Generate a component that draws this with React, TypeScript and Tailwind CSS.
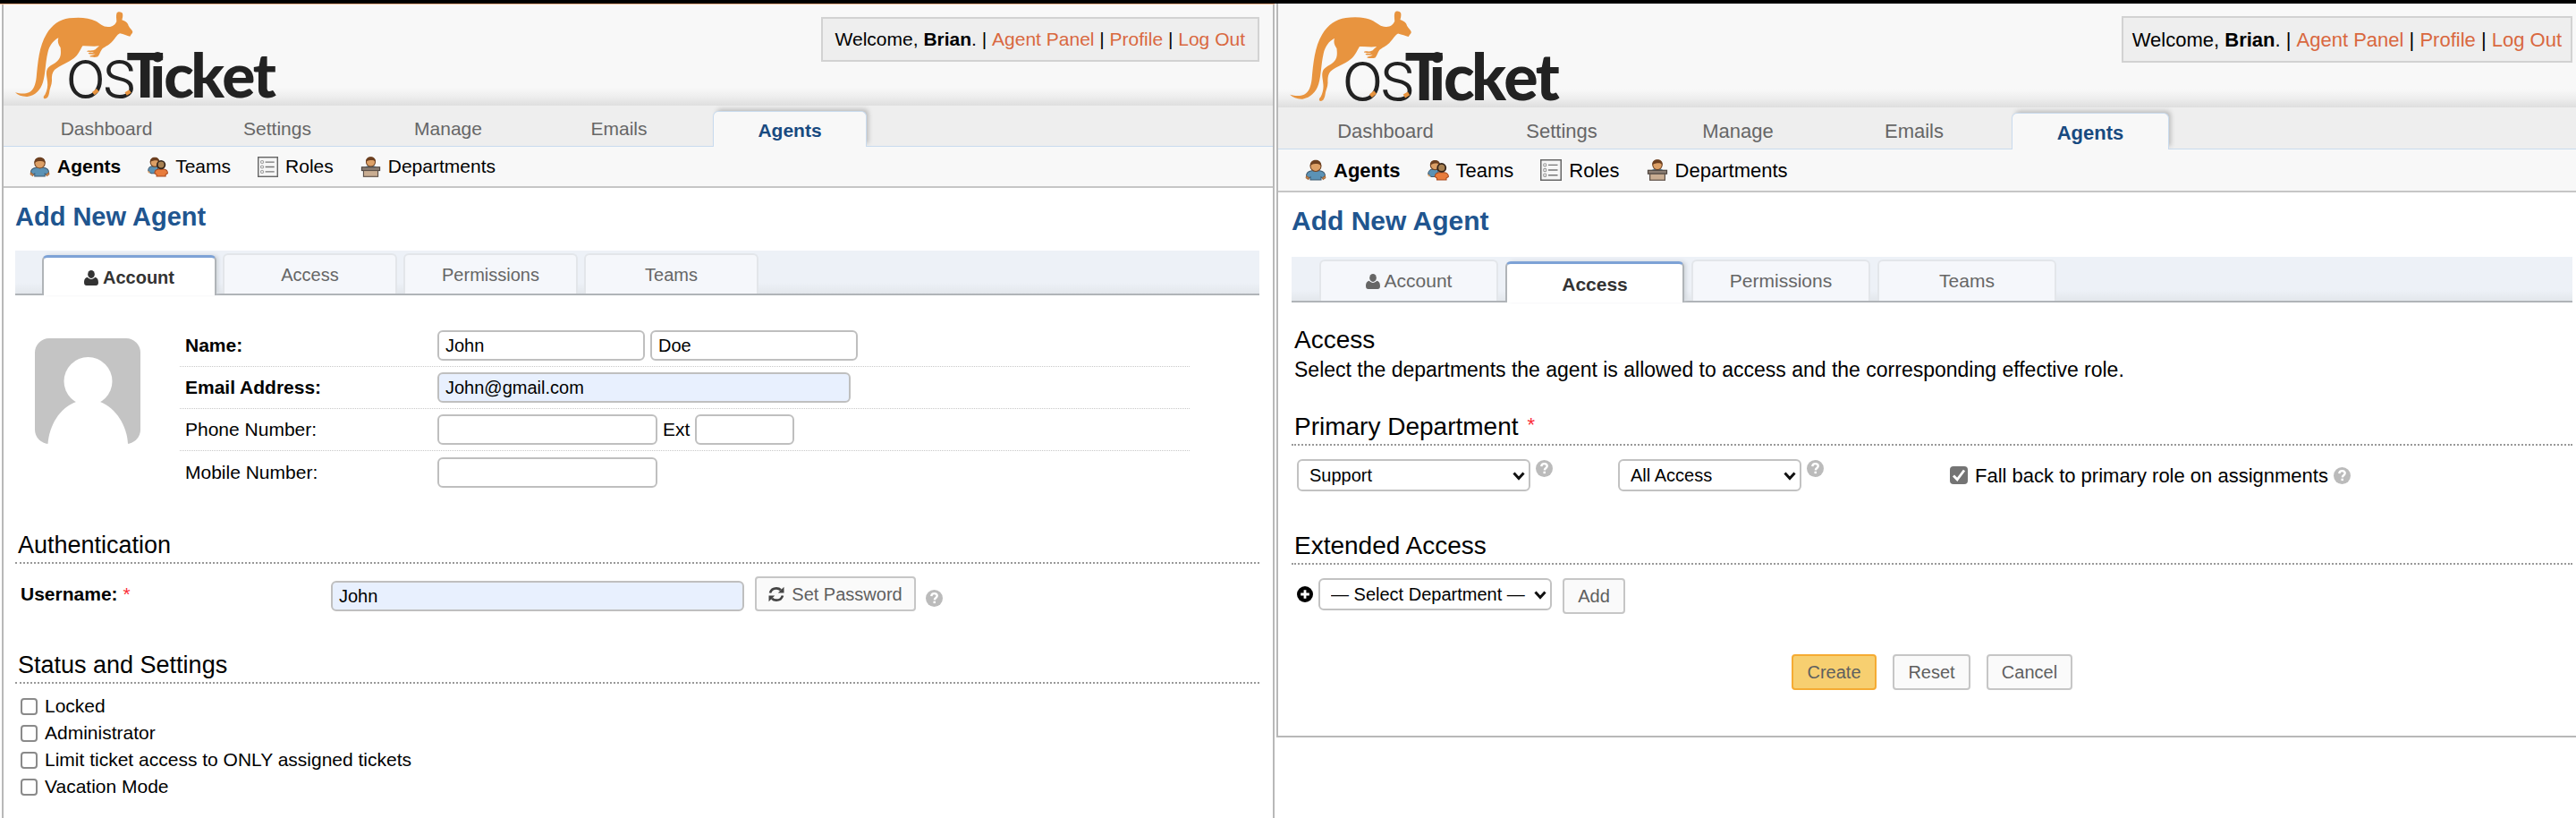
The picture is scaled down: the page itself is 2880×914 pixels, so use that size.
import React from "react";

type Size = "sm" | "lg";

const styles = {
  sm: {
    header: "h-[113px]",
    logo: "h-[108px] w-[300px]",
    welcome: "mt-[14px] mr-[15px] h-[50px] px-[14px] text-[21px]",
    nav: "h-[46px] gap-[19px] pl-[29px] text-[21px]",
    navItem: "w-[172px]",
    navActive: "h-[40px]",
    sub: "h-[46px] gap-[30px] pl-[29px] text-[21px]",
    subItem: "gap-2",
    subIcon: "size-[23px]",
    body: "pl-[13px] pr-[15px]",
    title: "pt-[14px] mb-5 text-[29px]",
    bar: "h-[50px] gap-[7px] pl-[30px] text-[20px]",
    tab: "w-[195px] h-[45px]",
    heading: "text-[27px]",
  },
  lg: {
    header: "h-[116px]",
    logo: "h-[112px] w-[310px]",
    welcome: "mt-[14px] mr-1 h-[52px] px-[10px] text-[22px]",
    nav: "h-[47px] gap-[21px] pl-[32px] text-[22px]",
    navItem: "w-[176px]",
    navActive: "h-[41px]",
    sub: "h-[48px] gap-[30px] pl-[30px] text-[22px]",
    subItem: "gap-2",
    subIcon: "size-[24px]",
    body: "pl-[15px] pr-1",
    title: "pt-[14px] mb-[22px] text-[30px]",
    bar: "h-[51px] gap-2 pl-[31px] text-[21px]",
    tab: "w-[200px] h-[46px]",
    heading: "text-[28px]",
  },
};

function Logo({ className }: { className: string }) {
  return (
    <svg viewBox="39 12 900 324" className={className} role="img" aria-label="osTicket">
      <path
        fill="#e8943f"
        d="M51 307C66 311 84 313 97 307C113 299 119 281 122 257C127 205 131 152 156 111C174 81 200 62 232 58C262 54 298 55 322 68C337 77 345 86 362 87C377 88 386 80 391 69C391 60 388 50 392 40C396 34 408 36 411 42C413 50 411 57 409 64C419 68 428 72 431 83C435 91 444 97 445 104C444 109 439 112 436 119C426 117 415 112 402 109C392 113 386 128 374 139C363 150 349 155 342 162C336 169 335 179 328 187C320 190 308 189 301 186C302 182 313 183 320 178C311 179 301 179 296 176C297 172 307 175 315 171C307 171 297 173 291 169C294 163 309 170 320 163C325 158 330 153 333 151C313 154 293 150 277 151C268 166 263 181 248 192C228 208 202 215 183 231C175 240 173 252 174 268C174 283 166 294 165 309C163 318 160 327 151 328C144 327 145 319 151 314C158 301 161 286 159 271C158 255 153 243 158 230C164 216 183 212 193 201C207 188 204 171 203 157C195 146 192 136 196 124C177 134 165 151 160 174C152 208 153 243 144 273C136 299 118 317 92 321C76 322 60 316 51 307Z"
      />
      <text y="324" fill="#222222">
        <tspan x="222 342" fontFamily="Roboto, sans-serif" fontWeight="300" fontSize="232">os</tspan>
        <tspan x="424 502 550 640 745 848" fontFamily="Lato, sans-serif" fontWeight="900" fontSize="208">Ticket</tspan>
      </text>
      <g stroke="#e8943f" strokeWidth="13">
        <path d="M313 311L328 299" />
        <path d="M422 312L437 303" />
      </g>
    </svg>
  );
}

function Person({ x = 0, shirt, skin, hair }: { x?: number; shirt: string; skin: string; hair: string }) {
  return (
    <g transform={`translate(${x} 0)`} strokeWidth="0.7">
      <path d="M1 12.5C1 10 3 8.800 5 8.500H11C13 8.800 15 10 15 12.500L13 14L12 13.200V15.300H4V13.200L3 14Z" fill={shirt} stroke="#3f5a70" />
      <path d="M1 12.500L3 14L2.500 15L0.800 13.800ZM15 12.500L13 14L13.500 15L15.200 13.800Z" fill={skin} stroke="#a5693a" />
      <circle cx="8" cy="5" r="4" fill={skin} stroke="#6d4020" />
      <path d="M3.900 5C3.600 2 5.500 0.500 8 0.500S12.400 2 12.100 5C11 4 10.500 3.400 9 3.400S5 3.500 3.900 5Z" fill={hair} />
    </g>
  );
}

function AgentIcon({ className }: { className: string }) {
  return (
    <svg viewBox="0 0 16 16" className={className} aria-hidden="true">
      <Person shirt="#5b92b5" skin="#dda066" hair="#6d4020" />
    </svg>
  );
}

function TeamIcon({ className }: { className: string }) {
  return (
    <svg viewBox="0 0 16 16" className={className} aria-hidden="true">
      <path d="M0.500 10.800C0.500 9 2 7.600 3.500 7.400H8V13H3L1.800 12.400Z" fill="#5b92b5" stroke="#3f5a70" strokeWidth="0.700" />
      <path d="M0.300 10.800L2 12.200L1.500 13L0.300 12.200Z" fill="#dda066" />
      <circle cx="5.600" cy="4.400" r="3.400" fill="#dda066" stroke="#6d4020" strokeWidth="0.700" />
      <path d="M2 4.600C1.700 2 3.500 0.600 5.600 0.600S9.400 2 9.200 4.400C8 3.300 7.600 3 6.400 3S3 3.200 2 4.600Z" fill="#6d4020" />
      <path d="M5.500 13C5.500 11 7 10 8.500 9.800H12.500C14 10 15.600 11 15.600 13L14 14V15.300H7V14Z" fill="#e87c3c" stroke="#a8481c" strokeWidth="0.700" />
      <circle cx="10.500" cy="6.300" r="3" fill="#a88152" stroke="#33241a" strokeWidth="1.200" />
    </svg>
  );
}

function RoleIcon({ className }: { className: string }) {
  return (
    <svg viewBox="0 0 16 16" className={className} aria-hidden="true">
      <rect x="0.500" y="0.500" width="15" height="15" fill="#f6f6f6" stroke="#666666" />
      <g fill="none" stroke="#999999" strokeWidth="0.700">
        <circle cx="3.500" cy="4.200" r="1.100" />
        <circle cx="3.500" cy="8" r="1.100" />
        <circle cx="3.500" cy="11.800" r="1.100" />
      </g>
      <path d="M6 4.200H13M6 8H13M6 11.800H13" stroke="#777777" strokeWidth="0.900" />
    </svg>
  );
}

function DepartmentIcon({ className }: { className: string }) {
  return (
    <svg viewBox="0 0 16 16" className={className} aria-hidden="true">
      <path d="M3.500 8.500C4 7.500 5.500 7 8 7S12 7.500 12.500 8.500Z" fill="#5b92b5" />
      <circle cx="8" cy="4.200" r="3.500" fill="#dda066" stroke="#6d4020" strokeWidth="0.700" />
      <path d="M4.200 4.200C4 1.500 5.800 0.200 8 0.200S12 1.500 11.800 4.200C10.800 3 10 2.800 8.800 2.800S5.200 3 4.200 4.200Z" fill="#6d4020" />
      <rect x="1" y="8.200" width="14" height="2.600" fill="#8b7d72" stroke="#4d4540" strokeWidth="0.800" />
      <rect x="2.400" y="10.800" width="11.200" height="4.700" fill="#c9ad92" stroke="#5c5048" strokeWidth="0.800" />
    </svg>
  );
}

function UserGlyph() {
  return (
    <svg viewBox="0 0 15 16" className="mr-[5px] h-[17px] w-4" fill="currentColor" aria-hidden="true">
      <ellipse cx="7.500" cy="4.200" rx="3.600" ry="4.200" />
      <path d="M3.600 7.300C4.700 8.600 6 9.300 7.500 9.300S10.300 8.600 11.400 7.300C14 7.600 15 10 15 13C15 15 14 16 12.500 16H2.500C1 16 0 15 0 13C0 10 1 7.600 3.600 7.300Z" />
    </svg>
  );
}

function Help({ className = "" }: { className?: string }) {
  return (
    <a href="#help" aria-label="Help" className={`block shrink-0 ${className}`}>
      <svg viewBox="0 0 20 20" className="size-[19px]" aria-hidden="true">
        <circle cx="10" cy="10" r="10" fill="#bbbbbb" />
        <path d="M6.600 7.400C6.800 5.300 8.200 4.300 10 4.300C12.100 4.300 13.400 5.500 13.400 7.200C13.400 9.500 10.500 9.400 10.300 12" fill="none" stroke="#ffffff" strokeWidth="2.500" />
        <rect x="8.900" y="13.400" width="2.700" height="2.500" fill="#ffffff" />
      </svg>
    </a>
  );
}

function Header({ size }: { size: Size }) {
  const s = styles[size];
  const links = ["Agent Panel", "Profile", "Log Out"];
  return (
    <header className={`flex items-start justify-between bg-[linear-gradient(to_top,#dedede_0,#eeeeee_10px,#f8f8f8_20px)] pl-[9px] ${s.header}`}>
      <a href="#home">
        <Logo className={s.logo} />
      </a>
      <p className={`flex items-center border-2 border-[#d2d2d2] bg-[#eeeeee] whitespace-pre ${s.welcome}`}>
        <span>Welcome, </span>
        <strong>Brian</strong>
        <span>.</span>
        {links.map((link) => (
          <React.Fragment key={link}>
            <span> | </span>
            <a href="#account" className="text-[#d9683f]">{link}</a>
          </React.Fragment>
        ))}
      </p>
    </header>
  );
}

function Navigation({ size }: { size: Size }) {
  const s = styles[size];
  const tabs = ["Dashboard", "Settings", "Manage", "Emails", "Agents"];
  const items = [
    { label: "Agents", Icon: AgentIcon },
    { label: "Teams", Icon: TeamIcon },
    { label: "Roles", Icon: RoleIcon },
    { label: "Departments", Icon: DepartmentIcon },
  ];
  return (
    <>
      <nav className={`flex items-end border-b border-[#c9dbee] bg-[#eeeeee] ${s.nav}`}>
        {tabs.map((tab) => (
          <a
            key={tab}
            href="#section"
            className={`flex items-center justify-center pt-0.5 ${s.navItem} ${s.navActive} ${
              tab === "Agents"
                ? "-mb-px rounded-t-[6px] border border-b-0 border-[#c9dbee] bg-[#f8f8f8] font-bold text-[#184a80] shadow-[3px_-3px_5px_-1px_#bbbbbb]"
                : "text-[#666666]"
            }`}
          >
            {tab}
          </a>
        ))}
      </nav>
      <nav className={`relative flex items-center border-b-2 border-[#c6c6c6] bg-[#f8f8f8] ${s.sub}`}>
        {items.map(({ label, Icon }) => (
          <a key={label} href="#list" className={`flex items-center ${s.subItem} ${label === "Agents" ? "font-bold" : ""}`}>
            <Icon className={s.subIcon} />
            {label}
          </a>
        ))}
      </nav>
    </>
  );
}

function Tabs({ size, active }: { size: Size; active: string }) {
  const s = styles[size];
  return (
    <div role="tablist" className={`flex items-end border-b-2 border-[#b0b4b8] bg-[linear-gradient(to_top,#e3e7ec,#edf1f7_12px)] ${s.bar}`}>
      {["Account", "Access", "Permissions", "Teams"].map((tab) => (
        <button
          key={tab}
          type="button"
          role="tab"
          aria-selected={tab === active}
          className={`flex items-center justify-center rounded-t-[6px] ${s.tab} ${
            tab === active
              ? "-mb-0.5 border-x-2 border-t-[3px] border-x-[#b0b4b8] border-t-[#7da2d6] bg-white pt-0.5 font-bold text-[#333333] shadow-[3px_-1px_4px_-1px_#cfd4da]"
              : "border-2 border-b-0 border-[#e3e6ea] bg-[#f5f7fb] text-[#666666]"
          }`}
        >
          {tab === "Account" && <UserGlyph />}
          {tab}
        </button>
      ))}
    </div>
  );
}

function Heading({ size, required, className, children }: { size: Size; required?: boolean; className: string; children: string }) {
  return (
    <h2 className={`border-b-2 border-dotted border-[#999999] pt-0.5 pb-px leading-9 ${styles[size].heading} ${className}`}>
      <span className="pl-[3px]">{children}</span>
      {required && <span className="ml-[10px] align-top text-[22px] leading-8 text-red-500">*</span>}
    </h2>
  );
}

const field = "h-[34px] rounded-[6px] border-2 border-[#bfbfbf] px-[7px] text-[20px]";
const buttonBase = "flex items-center justify-center rounded-[4px] border-2 text-[20px] text-[#5f5f5f]";
const buttonPlain = "border-[#c6c6c6] bg-[#fafafa]";

function Row({ id, label, bold, children }: { id: string; label: string; bold?: boolean; children: React.ReactNode }) {
  return (
    <div className="flex h-[47px] items-center border-b border-dotted border-[#c8c8c8] pl-[6px] last:border-0">
      <label htmlFor={id} className={`w-[282px] ${bold ? "font-bold" : ""}`}>{label}</label>
      <div className="flex items-center gap-[6px]">{children}</div>
    </div>
  );
}

function Avatar() {
  return (
    <svg viewBox="0 0 118 118" className="mt-[15px] ml-[22px] size-[118px] shrink-0" role="img" aria-label="Avatar">
      <rect width="118" height="118" rx="16" fill="#c4c4c4" />
      <ellipse cx="59.500" cy="48" rx="27" ry="27" fill="#ffffff" />
      <path d="M14.500 118C16 98 27 78 46 71H73C91 78 103 98 104 118Z" fill="#ffffff" />
    </svg>
  );
}

function AccountPanel() {
  return (
    <form className="text-[21px]">
      <div className="mt-[33px] flex">
        <Avatar />
        <div className="mr-[78px] ml-[44px] flex-1">
          <Row id="first" label="Name:" bold>
            <input id="first" defaultValue="John" className={`w-[232px] ${field}`} />
            <input aria-label="Last name" defaultValue="Doe" className={`w-[232px] ${field}`} />
          </Row>
          <Row id="email" label="Email Address:" bold>
            <input id="email" defaultValue="John@gmail.com" className={`w-[462px] bg-[#e8f0fe] ${field}`} />
          </Row>
          <Row id="phone" label="Phone Number:">
            <input id="phone" className={`w-[246px] ${field}`} />
            <label htmlFor="ext">Ext</label>
            <input id="ext" className={`w-[111px] ${field}`} />
          </Row>
          <Row id="mobile" label="Mobile Number:">
            <input id="mobile" className={`w-[246px] ${field}`} />
          </Row>
        </div>
      </div>

      <Heading size="sm" className="mt-[38px]">Authentication</Heading>
      <div className="mt-[14px] flex h-[39px] items-end pl-[6px]">
        <label htmlFor="username" className="w-[347px] self-center font-bold">
          Username: <span className="align-top font-normal text-red-500">*</span>
        </label>
        <input id="username" defaultValue="John" className={`w-[462px] bg-[#e8f0fe] ${field}`} />
        <button type="button" className={`ml-3 h-[39px] w-[180px] ${buttonBase} ${buttonPlain}`}>
          <svg viewBox="0 0 18 18" className="mr-2 size-[18px]" aria-hidden="true">
            <path d="M2 7.500C3 4 5.700 2.300 9 2.300C11 2.300 12.700 3 14 4.300M16 10.500C15 14 12.300 15.700 9 15.700C7 15.700 5.300 15 4 13.700" fill="none" stroke="#444444" strokeWidth="2.700" />
            <path d="M17.500 0.800V7.500H10.800ZM0.500 17.200V10.500H7.200Z" fill="#444444" />
          </svg>
          Set Password
        </button>
        <Help className="mb-[5px] ml-[11px]" />
      </div>

      <Heading size="sm" className="mt-10">Status and Settings</Heading>
      <div className="mt-[10px] pl-[6px]">
        {["Locked", "Administrator", "Limit ticket access to ONLY assigned tickets", "Vacation Mode"].map((option) => (
          <label key={option} className="flex h-[30px] items-center gap-2">
            <input type="checkbox" className="size-[19px] appearance-none rounded-[4px] border-2 border-[#8a8a8a] bg-white" />
            {option}
          </label>
        ))}
      </div>
    </form>
  );
}

function Select({ label, value, className }: { label: string; value: string; className: string }) {
  return (
    <div className={`relative ${className}`}>
      <select aria-label={label} className="h-9 w-full appearance-none rounded-[6px] border-2 border-[#c2c2c2] bg-white pl-3 text-[20px]">
        <option>{value}</option>
      </select>
      <svg viewBox="0 0 14 10" className="pointer-events-none absolute top-[14px] right-[6px] h-[10px] w-[14px]" aria-hidden="true">
        <path d="M1.500 1.500L7 7.500L12.500 1.500" fill="none" stroke="#111111" strokeWidth="3" />
      </svg>
    </div>
  );
}

function AccessPanel() {
  return (
    <form className="text-[22px]">
      <h2 className="mt-[24px] pl-[3px] text-[28px] leading-9">Access</h2>
      <p className="pl-[3px] text-[23px] leading-[30px]">
        Select the departments the agent is allowed to access and the corresponding effective role.
      </p>

      <Heading size="lg" required className="mt-[29px]">Primary Department</Heading>
      <div className="mt-[15px] flex items-start pl-[6px]">
        <div className="flex w-[359px] gap-[6px]">
          <Select label="Primary department" value="Support" className="w-[261px]" />
          <Help className="mt-px" />
        </div>
        <div className="flex w-[371px] gap-[6px]">
          <Select label="Primary role" value="All Access" className="w-[205px]" />
          <Help className="mt-px" />
        </div>
        <div className="flex h-9 items-center gap-[6px]">
          <label className="flex items-center gap-2">
            <span className="relative block size-5">
              <input type="checkbox" defaultChecked className="block size-5 appearance-none rounded-[4px] bg-[#747474]" />
              <svg viewBox="0 0 20 20" className="pointer-events-none absolute inset-0" aria-hidden="true">
                <path d="M4 10.500L8.200 14.800L16 4.500" fill="none" stroke="#ffffff" strokeWidth="2.800" />
              </svg>
            </span>
            Fall back to primary role on assignments
          </label>
          <Help />
        </div>
      </div>

      <Heading size="lg" className="mt-[41px]">Extended Access</Heading>
      <div className="mt-[15px] flex items-start pl-[6px]">
        <svg viewBox="0 0 18 18" className="mt-[9px] mr-[6px] size-[18px]" aria-hidden="true">
          <circle cx="9" cy="9" r="9" fill="#000000" />
          <path d="M9 4.200V13.800M4.200 9H13.800" stroke="#ffffff" strokeWidth="2.800" />
        </svg>
        <Select label="Extended department" value="— Select Department —" className="w-[261px]" />
        <button type="button" className={`ml-3 h-10 w-[70px] ${buttonBase} ${buttonPlain}`}>Add</button>
      </div>

      <div className="mt-[45px] mb-[51px] flex justify-center gap-[18px]">
        <button type="submit" className={`h-10 w-[95px] ${buttonBase} border-[#f5ab33] bg-[#f7cf70]`}>Create</button>
        <button type="reset" className={`h-10 w-[87px] ${buttonBase} ${buttonPlain}`}>Reset</button>
        <button type="button" className={`h-10 w-[96px] ${buttonBase} ${buttonPlain}`}>Cancel</button>
      </div>
    </form>
  );
}

function Screen({ size, active, className, children }: { size: Size; active: string; className: string; children: React.ReactNode }) {
  const s = styles[size];
  return (
    <section className={`border-[#b8b8b8] bg-white ${className}`}>
      <Header size={size} />
      <Navigation size={size} />
      <div className={s.body}>
        <h1 className={`leading-9 font-bold text-[#20558f] ${s.title}`}>Add New Agent</h1>
        <Tabs size={size} active={active} />
        {children}
      </div>
    </section>
  );
}

export default function App() {
  return (
    <main className="min-h-screen overflow-hidden border-t-4 border-black bg-white font-['Liberation_Sans',Arial,sans-serif] text-black">
      <div className="grid min-h-[calc(100vh-4px)] grid-cols-[1425fr_1455fr]">
        <div className="flex border-t border-t-[#f3b48c] pl-0.5">
          <Screen size="sm" active="Account" className="flex-1 border-x-2">
            <AccountPanel />
          </Screen>
        </div>
        <div className="pl-0.5">
          <Screen size="lg" active="Access" className="border-b-2 border-l-2">
            <AccessPanel />
          </Screen>
        </div>
      </div>
    </main>
  );
}
